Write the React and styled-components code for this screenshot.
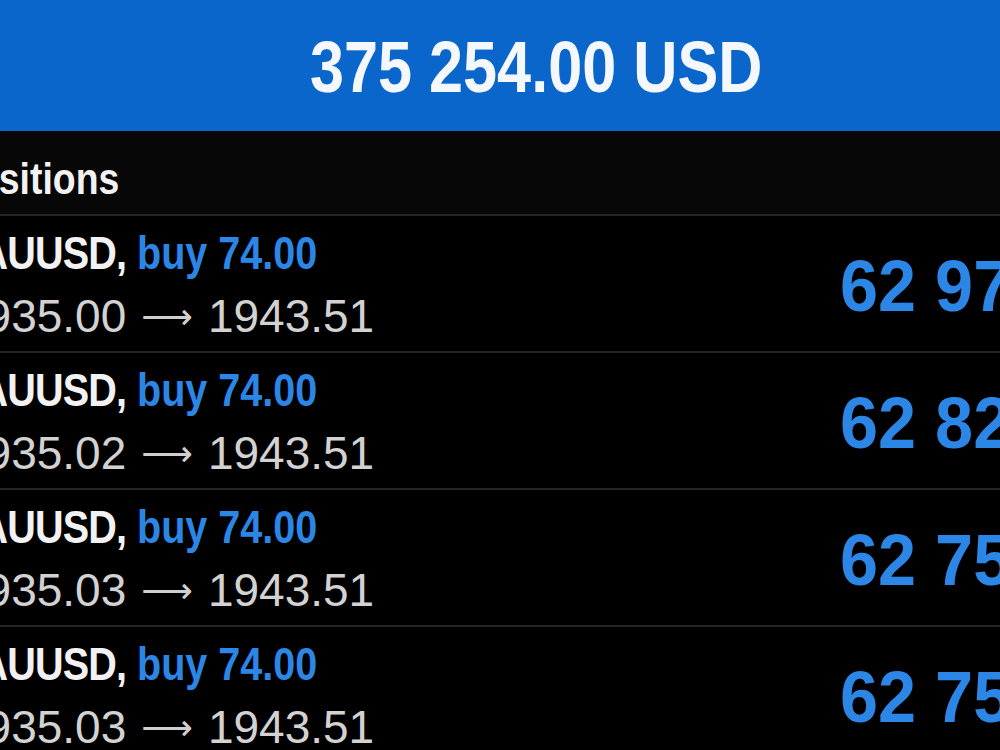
import React from 'react';
import styled, { createGlobalStyle } from 'styled-components';

const GlobalStyle = createGlobalStyle`
  html, body {
    margin: 0;
    padding: 0;
    background: #000;
    overflow: hidden;
  }
  body {
    font-family: "Liberation Sans", Arial, sans-serif;
  }
`;

const Viewport = styled.div`
  width: 1000px;
  height: 750px;
  overflow: hidden;
  background: #000;
`;

const Screen = styled.div`
  margin-left: -56px;
  width: 1184px;
  box-sizing: border-box;
  padding: 0 16px;
  display: flex;
  flex-direction: column;
`;

const Balance = styled.header`
  height: 132px;
  box-sizing: border-box;
  margin: 0 -16px;
  padding-top: 31px;
  background: #0a66cb;
  border-bottom: 1px solid #06386f;
  display: flex;
  justify-content: center;
`;

const Condensed = styled.span`
  display: inline-block;
  white-space: nowrap;
  transform: scaleX(${p => p.$scale || 0.85});
  transform-origin: ${p => p.$origin || 'center'};
`;

const BalanceText = styled(Condensed)`
  font-size: 72px;
  line-height: 72px;
  font-weight: 700;
  color: #f4f8fc;
`;

const SectionTitle = styled.div`
  height: 83px;
  box-sizing: border-box;
  margin: -1px -16px 0;
  padding: 26px 0 0 7px;
  font-size: 44px;
  line-height: 44px;
  font-weight: 700;
  color: #f2f2f2;
  background: #070707;
`;

const Row = styled.div`
  height: 137px;
  box-sizing: border-box;
  border-top: 2px solid #242424;
  display: flex;
  align-items: center;
`;

const Info = styled.div`
  flex: 1;
  align-self: flex-start;
  padding-top: 11px;
  display: flex;
  flex-direction: column;
`;

const Title = styled(Condensed)`
  margin-left: -6px;
  font-size: 46px;
  line-height: 52px;
  font-weight: 700;
  color: #f2f2f2;
`;

const Symbol = styled.span`
  letter-spacing: -1px;
`;

const Side = styled.span`
  color: ${p => (p.$type === 'sell' ? '#e0463c' : '#2c86e6')};
`;

const Prices = styled.div`
  margin-top: 11px;
  font-size: 46px;
  line-height: 52px;
  color: #d2d2d2;
  white-space: nowrap;
`;

const Arrow = styled.span`
  display: inline-block;
  margin: 0 15px 0 15px;
  font-family: "DejaVu Sans", "Liberation Sans", sans-serif;
  font-size: 36px;
  vertical-align: 3px;
  color: #cfcfcf;
`;

const Profit = styled.div`
  display: flex;
  justify-content: flex-end;
  margin: 5px -32px 0 0;
`;

const ProfitText = styled(Condensed)`
  font-size: 72px;
  line-height: 72px;
  font-weight: 700;
  color: #2c86e6;
`;

const positions = [
  { symbol: 'XAUUSD', side: 'buy', volume: '74.00', open: '1935.00', price: '1943.51', profit: '62 974.00' },
  { symbol: 'XAUUSD', side: 'buy', volume: '74.00', open: '1935.02', price: '1943.51', profit: '62 826.00' },
  { symbol: 'XAUUSD', side: 'buy', volume: '74.00', open: '1935.03', price: '1943.51', profit: '62 752.00' },
  { symbol: 'XAUUSD', side: 'buy', volume: '74.00', open: '1935.03', price: '1943.51', profit: '62 752.00' },
];

const App = () => {
  return (
    <Viewport>
      <GlobalStyle />
      <Screen>
        <Balance>
          <BalanceText>375 254.00 USD</BalanceText>
        </Balance>
        <SectionTitle>
          <Condensed $origin="left">Positions</Condensed>
        </SectionTitle>
        {positions.map((p, i) => (
          <Row key={i}>
            <Info>
              <div>
                <Title $origin="left" $scale={0.86}>
                  <Symbol>{p.symbol},</Symbol> <Side $type={p.side}>{p.side} {p.volume}</Side>
                </Title>
              </div>
              <Prices>
                {p.open}<Arrow>⟶</Arrow>{p.price}
              </Prices>
            </Info>
            <Profit>
              <ProfitText $origin="right" $scale={0.95}>{p.profit}</ProfitText>
            </Profit>
          </Row>
        ))}
      </Screen>
    </Viewport>
  );
};

export default App;
